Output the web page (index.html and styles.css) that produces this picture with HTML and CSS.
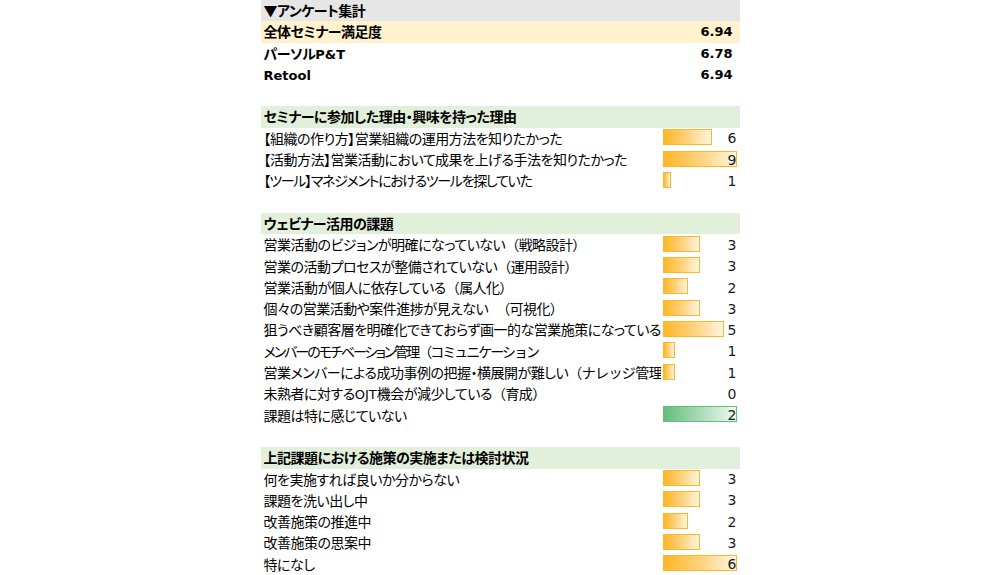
FILE: index.html
```html
<!DOCTYPE html>
<html lang="ja">
<head>
<meta charset="utf-8">
<link rel="stylesheet" href="styles.css">
</head>
<body>
<div class="sheet">
  <div class="row gray bold"><div class="a">▼アンケート集計</div><div class="b"></div></div>
  <div class="row yellow bold"><div class="a">全体セミナー満足度</div><div class="b score"><span class="lat">6.94</span></div></div>
  <div class="row bold"><div class="a">パーソル<span class="lat">P&amp;T</span></div><div class="b score"><span class="lat">6.78</span></div></div>
  <div class="row bold"><div class="a"><span class="lat">Retool</span></div><div class="b score"><span class="lat">6.94</span></div></div>
  <div class="row"></div>

  <div class="row green bold"><div class="a">セミナーに参加した理由・興味を持った理由</div><div class="b"></div></div>
  <div class="row"><div class="a">【組織の作り方】営業組織の運用方法を知りたかった</div><div class="b"><span class="bar" style="width:49px"></span><span class="v">6</span></div></div>
  <div class="row"><div class="a">【活動方法】営業活動において成果を上げる手法を知りたかった</div><div class="b"><span class="bar" style="width:74px"></span><span class="v">9</span></div></div>
  <div class="row"><div class="a kana">【ツール】マネジメントにおけるツールを探していた</div><div class="b"><span class="bar" style="width:8px"></span><span class="v">1</span></div></div>
  <div class="row"></div>

  <div class="row green bold"><div class="a">ウェビナー活用の課題</div><div class="b"></div></div>
  <div class="row"><div class="a">営業活動のビジョンが明確になっていない<span class="paren">（戦略設計）</span></div><div class="b"><span class="bar" style="width:37px"></span><span class="v">3</span></div></div>
  <div class="row"><div class="a">営業の活動プロセスが整備されていない<span class="paren">（運用設計）</span></div><div class="b"><span class="bar" style="width:37px"></span><span class="v">3</span></div></div>
  <div class="row"><div class="a">営業活動が個人に依存している<span class="paren">（属人化）</span></div><div class="b"><span class="bar" style="width:25px"></span><span class="v">2</span></div></div>
  <div class="row"><div class="a">個々の営業活動や案件進捗が見えない<span class="paren gap">（可視化）</span></div><div class="b"><span class="bar" style="width:37px"></span><span class="v">3</span></div></div>
  <div class="row"><div class="a">狙うべき顧客層を明確化できておらず画一的な営業施策になっている</div><div class="b"><span class="bar" style="width:61px"></span><span class="v">5</span></div></div>
  <div class="row"><div class="a kana-x">メンバーのモチベーション管理<span class="paren">（コミュニケーション</span></div><div class="b"><span class="bar" style="width:12px"></span><span class="v">1</span></div></div>
  <div class="row"><div class="a">営業メンバーによる成功事例の把握・横展開が難しい<span class="paren">（ナレッジ管理）</span></div><div class="b"><span class="bar" style="width:12px"></span><span class="v">1</span></div></div>
  <div class="row"><div class="a">未熟者に対する<span class="lat-r">OJT</span>機会が減少している<span class="paren">（育成）</span></div><div class="b"><span class="v">0</span></div></div>
  <div class="row"><div class="a">課題は特に感じていない</div><div class="b"><span class="bar bar-green" style="width:74px"></span><span class="v">2</span></div></div>
  <div class="row"></div>

  <div class="row green bold"><div class="a">上記課題における施策の実施または検討状況</div><div class="b"></div></div>
  <div class="row"><div class="a">何を実施すれば良いか分からない</div><div class="b"><span class="bar" style="width:37px"></span><span class="v">3</span></div></div>
  <div class="row"><div class="a">課題を洗い出し中</div><div class="b"><span class="bar" style="width:37px"></span><span class="v">3</span></div></div>
  <div class="row"><div class="a">改善施策の推進中</div><div class="b"><span class="bar" style="width:25px"></span><span class="v">2</span></div></div>
  <div class="row"><div class="a">改善施策の思案中</div><div class="b"><span class="bar" style="width:37px"></span><span class="v">3</span></div></div>
  <div class="row"><div class="a">特になし</div><div class="b"><span class="bar" style="width:74px"></span><span class="v">6</span></div></div>
</div>
</body>
</html>
```

FILE: styles.css
```css
html, body {
  margin: 0;
  padding: 0;
  background: #ffffff;
}

body {
  font-family: "Noto Sans CJK JP", sans-serif;
  font-size: 14px;
  letter-spacing: -0.5px;
  color: #000000;
  font-feature-settings: "palt";
}

.sheet {
  width: 479px;
  margin: 0 auto;
  display: flex;
  flex-direction: column;
}

.row {
  height: 21.3px;
  display: flex;
  flex-shrink: 0;
}

.gray { background: #e7e6e6; }
.yellow { background: #fff2cc; }
.green { background: #e2efda; }

.bold { font-weight: 700; }

.a {
  width: 400px;
  flex-shrink: 0;
  padding-left: 3px;
  box-sizing: border-box;
  white-space: nowrap;
  overflow: hidden;
  line-height: 21.3px;
}

/* katakana-heavy labels: Excel's UI font sets kana narrower */
.kana { letter-spacing: -1.3px; }
.kana-x { letter-spacing: -2px; }

.paren {
  font-feature-settings: normal;
  letter-spacing: -0.6px;
}

.kana-x .paren { letter-spacing: -2px; }

.paren.gap { margin-left: 8px; }

.b {
  flex: 1;
  display: grid;
  grid-template-columns: 1fr;
  grid-template-rows: 1fr;
  padding: 0 3px 0 2px;
  align-items: center;
}

.b > * {
  grid-area: 1 / 1;
}

.bar {
  justify-self: start;
  align-self: start;
  margin-top: 1.5px;
  height: 16px;
  box-sizing: border-box;
  border: 1px solid #ffb628;
  background: linear-gradient(to right, #ffb628 0%, #ffd27c 50%, #fff4e0 100%);
}

.bar-green {
  border-color: #63be7b;
  background: linear-gradient(to right, #63be7b 0%, #a9dab6 50%, #f0f9f2 100%);
}

.v {
  justify-self: end;
  font-family: "DejaVu Sans", sans-serif;
  font-size: 14px;
  letter-spacing: 0;
  color: #1a1a1a;
}

.score {
  padding-right: 7px;
}

.score .lat {
  justify-self: end;
}

.lat {
  font-family: "DejaVu Sans", sans-serif;
  font-size: 13px;
  letter-spacing: 0;
}

.lat-r {
  font-family: "DejaVu Sans", sans-serif;
  font-size: 13px;
  letter-spacing: 0;
}
```
